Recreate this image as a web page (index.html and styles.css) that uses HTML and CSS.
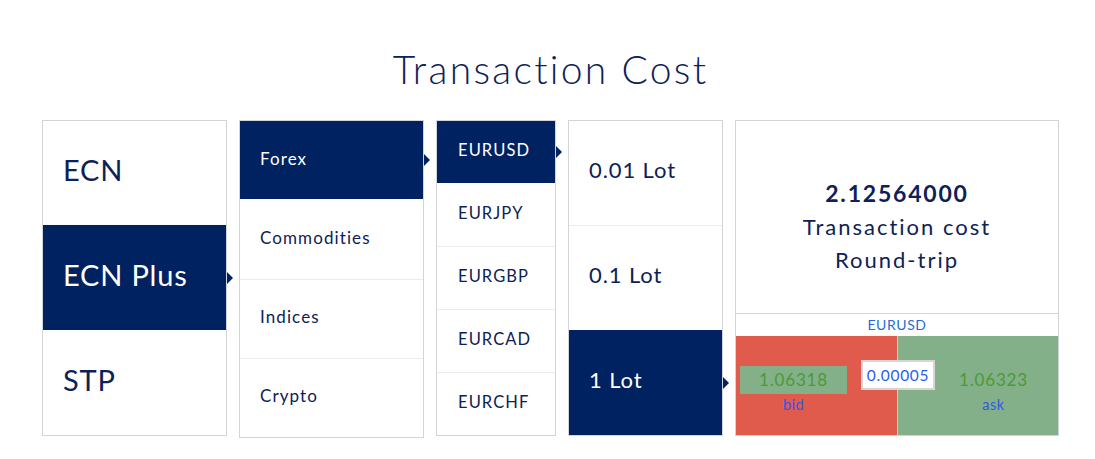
FILE: index.html
```html
<!DOCTYPE html>
<html>
<head>
<meta charset="utf-8">
<link rel="stylesheet" href="styles.css">
</head>
<body>
<div class="page">
  <h1 class="title">Transaction Cost</h1>
  <div class="calc">
    <ul class="col col-account">
      <li class="item">ECN</li>
      <li class="item active">ECN Plus</li>
      <li class="item">STP</li>
    </ul>
    <ul class="col col-market">
      <li class="item active">Forex</li>
      <li class="item">Commodities</li>
      <li class="item">Indices</li>
      <li class="item">Crypto</li>
    </ul>
    <ul class="col col-symbol">
      <li class="item active">EURUSD</li>
      <li class="item">EURJPY</li>
      <li class="item">EURGBP</li>
      <li class="item">EURCAD</li>
      <li class="item">EURCHF</li>
    </ul>
    <ul class="col col-lot">
      <li class="item">0.01 Lot</li>
      <li class="item">0.1 Lot</li>
      <li class="item active">1 Lot</li>
    </ul>
    <div class="col result">
      <div class="result-main">
        <div class="cost">2.12564000</div>
        <div class="cost-label">Transaction cost</div>
        <div class="cost-label">Round-trip</div>
      </div>
      <div class="pair">EURUSD</div>
      <div class="quote">
        <div class="half bid">
          <div class="price price-box">1.06318</div>
          <div class="side">bid</div>
        </div>
        <div class="half ask">
          <div class="price">1.06323</div>
          <div class="side">ask</div>
        </div>
        <div class="spread">0.00005</div>
      </div>
    </div>
  </div>
</div>
</body>
</html>
```

FILE: styles.css
```css
* { box-sizing: border-box; }
html, body { margin: 0; padding: 0; background: #fff; }
body { font-family: "Lato", "Liberation Sans", sans-serif; color: #0d2157; }

.page { padding: 0 36px 0 42px; }

.title {
  margin: 0;
  height: 120px;
  padding-top: 44px;
  text-align: center;
  font-weight: 300;
  font-size: 39px;
  line-height: 50px;
  color: #0d2157;
  letter-spacing: 2.3px;
}

.calc { display: flex; gap: 12px; align-items: flex-start; }

.col {
  list-style: none;
  margin: 0;
  padding: 0;
  border: 1px solid #d3d3da;
  height: 316px;
  display: flex;
  flex-direction: column;
  background: #fff;
}

.item {
  position: relative;
  flex: 1;
  display: flex;
  align-items: center;
  border-top: 1px solid #ebebeb;
  color: #0d2157;
  padding-left: 20px;
  padding-bottom: 4px;
}
.item:first-child { border-top: none; }
.item.active { background: #012260; color: #fff; border-top-color: #012260; }
.item.active + .item { border-top-color: #fff; }
.item.active::after {
  content: "";
  position: absolute;
  right: -7px;
  top: 50%;
  margin-top: -6px;
  border-left: 6px solid #012260;
  border-top: 6px solid transparent;
  border-bottom: 6px solid transparent;
}

.col-account { width: 185px; }
.col-account .item { font-size: 29px; letter-spacing: 0.8px; padding-bottom: 8px; }

.col-market { width: 185px; height: 318px; }
.col-market .item { font-size: 17px; letter-spacing: 1.1px; }

.col-symbol { width: 120px; }
.col-symbol .item { font-size: 16.5px; letter-spacing: 1.1px; padding-left: 21px; }

.col-lot { width: 155px; }
.col-lot .item { font-size: 22px; letter-spacing: 0.9px; padding-bottom: 7px; }

.result { width: 324px; }
.result-main {
  height: 193px;
  display: flex;
  flex-direction: column;
  align-items: center;
  justify-content: center;
  padding-top: 18px;
  border-bottom: 1px solid #d3d3da;
}
.cost { font-size: 23px; font-weight: 700; line-height: 33px; color: #0d2157; letter-spacing: 1.8px; }
.cost-label { font-size: 22px; line-height: 33px; color: #0d2157; letter-spacing: 2px; }

.pair {
  height: 22px;
  text-align: center;
  font-size: 14px;
  line-height: 22px;
  color: #1f6bd8;
  letter-spacing: 0.6px;
}

.quote { position: relative; flex: 1; display: flex; }
.half {
  flex: none;
  width: 161px;
  display: flex;
  flex-direction: column;
  align-items: center;
  padding-top: 30px;
}
.bid { background: #e05b4c; padding-right: 50px; padding-left: 4px; }
.ask { background: #83b088; padding-left: 31px; border-left: 1px solid #c9d6c9; }
.price {
  height: 28px;
  line-height: 28px;
  font-size: 17px;
  color: #4b9a34;
  text-align: center;
  letter-spacing: 0.8px;
}
.price-box { width: 107px; background: #83b088; }
.side { font-size: 14.5px; line-height: 22px; color: #3058e3; letter-spacing: 0.5px; }

.spread {
  position: absolute;
  left: 125px;
  top: 24px;
  width: 74px;
  height: 30px;
  background: #fff;
  border: 2px solid #d6d6d6;
  font-size: 15.5px;
  line-height: 26px;
  text-align: center;
  color: #2b60e6;
  letter-spacing: 0.7px;
}
```
